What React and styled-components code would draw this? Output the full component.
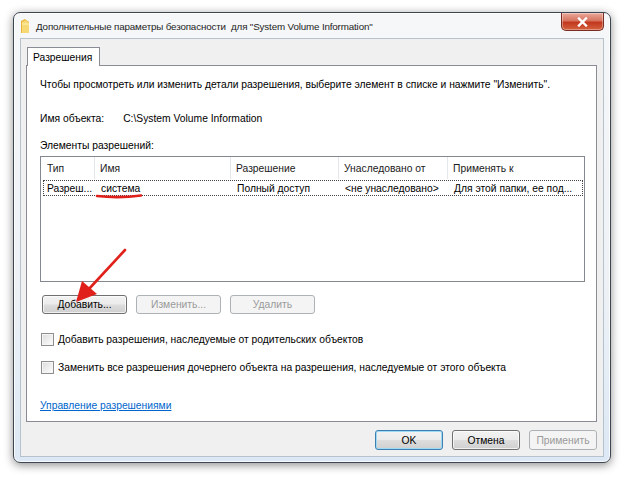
import React from 'react'
import styled, { createGlobalStyle, css } from 'styled-components'

const GlobalStyle = createGlobalStyle`
  html, body {
    margin: 0;
    padding: 0;
    background: #ffffff;
  }
  body {
    font-family: 'Liberation Sans', Arial, sans-serif;
    font-size: 10.3px;
    color: #000;
  }
`

const Page = styled.div`
  position: relative;
  width: 628px;
  height: 483px;
  padding: 12px 0 0 13px;
  box-sizing: border-box;
`

const Window = styled.div`
  width: 598px;
  height: 451px;
  box-sizing: border-box;
  border: 1px solid #3e4651;
  border-radius: 7px;
  background: linear-gradient(180deg, #f6f7f9 0%, #eef2f6 60%, #dce8f5 100%);
  box-shadow: 0 2px 10px rgba(0, 0, 0, 0.45), inset 0 0 0 1px rgba(255, 255, 255, 0.8);
  display: flex;
  flex-direction: column;
  padding: 0 6px 5px 6px;
`

const TitleBar = styled.div`
  height: 25px;
  display: flex;
  align-items: center;
  position: relative;
`

const TitleText = styled.div`
  margin-left: 6px;
  font-size: 9.8px;
  letter-spacing: -0.15px;
  color: #1e1e1e;
  padding-top: 2px;
`

const CloseButton = styled.div`
  position: absolute;
  right: 0;
  top: 0;
  width: 43px;
  height: 18px;
  box-sizing: border-box;
  border: 1px solid #7a2b22;
  border-top: none;
  border-radius: 0 0 5px 5px;
  background: linear-gradient(180deg, #e9a99b 0%, #d7735f 45%, #c2381f 55%, #d4623f 100%);
  box-shadow: inset 0 0 0 1px rgba(255, 255, 255, 0.35);
  display: flex;
  align-items: center;
  justify-content: center;
`

const Client = styled.div`
  flex: 1;
  background: #f0f0f0;
  border: 1px solid #b8c2cd;
  display: flex;
  flex-direction: column;
  padding: 8px 6px 0 5px;
`

const Tab = styled.div`
  align-self: flex-start;
  margin-left: 1px;
  width: 73px;
  padding-left: 5px;
  box-sizing: border-box;
  background: #ffffff;
  border: 1px solid #898c95;
  border-bottom: none;
  display: flex;
  align-items: center;
  position: relative;
  z-index: 1;
  margin-bottom: -1px;
  height: 19px;
`

const Panel = styled.div`
  height: 357px;
  box-sizing: border-box;
  background: #ffffff;
  border: 1px solid #898c95;
  padding: 11px 0 0 13px;
  display: flex;
  flex-direction: column;
`

const Line = styled.div`
  line-height: 15px;
  height: 15px;
  margin-top: ${(p) => p.$mt || 0}px;
  white-space: nowrap;
`

const Value = styled.span`
  margin-left: 19px;
`

const ListBox = styled.div`
  margin-top: 3px;
  width: 545px;
  height: 126px;
  box-sizing: border-box;
  border: 1px solid #828790;
  background: #fff;
`

const HeaderRow = styled.div`
  display: grid;
  grid-template-columns: 53px 136px 108px 109px 1fr;
  height: 22px;
`

const HeaderCell = styled.div`
  display: flex;
  align-items: center;
  padding-left: ${(p) => (p.$first ? 6 : 5)}px;
  border-left: ${(p) => (p.$first ? 'none' : '1px solid #e3e6ea')};
  color: #1a1a1a;
`

const DataRow = styled.div`
  display: grid;
  grid-template-columns: 51px 136px 108px 109px 1fr;
  margin: 1px 1px 0 2px;
  height: 16px;
  box-sizing: border-box;
  border: 1px dotted #444;
`

const DataCell = styled.div`
  display: flex;
  align-items: center;
  padding-left: ${(p) => (p.$first ? 3 : 6)}px;
  white-space: nowrap;
  overflow: hidden;
`

const ButtonRow = styled.div`
  display: flex;
  gap: ${(p) => p.$gap || 9}px;
  margin-top: ${(p) => p.$mt || 0}px;
  margin-left: ${(p) => p.$ml || 0}px;
  justify-content: ${(p) => (p.$end ? 'flex-end' : 'flex-start')};
`

const Button = styled.div`
  width: ${(p) => p.$w}px;
  height: ${(p) => p.$h || 19}px;
  box-sizing: border-box;
  border-radius: 3px;
  display: flex;
  align-items: center;
  justify-content: center;
  border: 1px solid #707070;
  background: linear-gradient(180deg, #f2f2f2 0%, #ebebeb 48%, #dddddd 52%, #cfcfcf 100%);
  box-shadow: inset 0 0 0 1px rgba(255, 255, 255, 0.7);
  color: #000;
  ${(p) =>
    p.$disabled &&
    css`
      border-color: #adb2b5;
      background: #f4f4f4;
      box-shadow: none;
      color: #9a9a9a;
    `}
  ${(p) =>
    p.$default &&
    css`
      border-color: #3c7fb1;
      box-shadow: inset 0 0 0 1px #9fdaf5;
    `}
`

const CheckRow = styled.div`
  display: flex;
  align-items: center;
  height: 15px;
  margin-top: ${(p) => p.$mt || 0}px;
  margin-left: 1px;
  white-space: nowrap;
`

const Checkbox = styled.div`
  width: 13px;
  height: 13px;
  box-sizing: border-box;
  border: 1px solid #8f8f8f;
  background: linear-gradient(135deg, #dcdcdc 0%, #f4f4f4 70%, #ffffff 100%);
  box-shadow: inset 0 0 0 1px #f5f5f5;
  margin-right: 4px;
`

const Link = styled.div`
  margin-top: 23px;
  color: #0066cc;
  text-decoration: underline;
  line-height: 15px;
`

const Footer = styled.div`
  padding: 8px 0 0;
`

const Annotation = styled.svg`
  position: absolute;
  left: 0;
  top: 0;
  pointer-events: none;
`

const FolderIcon = () => (
  <svg width="10" height="16" viewBox="0 0 10 16">
    <path d="M1 3 L5 1 L9 4 L9 15 L1 15 Z" fill="#e7b53a" />
    <path d="M2 4 L6 2 L9 5 L9 15 L2 15 Z" fill="#f6d874" />
    <path d="M2 6 L9 6" stroke="#fff2b8" strokeWidth="1" />
  </svg>
)

export default function App() {
  return (
    <Page>
      <GlobalStyle />
      <Window>
        <TitleBar>
          <FolderIcon />
          <TitleText>Дополнительные параметры безопасности&nbsp; для "System Volume Information"</TitleText>
          <CloseButton>
            <svg width="11" height="10" viewBox="0 0 11 10">
              <path d="M2 1.5 L9 8.5 M9 1.5 L2 8.5" stroke="#ffffff" strokeWidth="2.4" strokeLinecap="square" />
            </svg>
          </CloseButton>
        </TitleBar>
        <Client>
          <Tab>Разрешения</Tab>
          <Panel>
            <Line>
              Чтобы просмотреть или изменить детали разрешения, выберите элемент в списке и нажмите "Изменить".
            </Line>
            <Line $mt={19}>
              Имя объекта:<Value>C:\System Volume Information</Value>
            </Line>
            <Line $mt={12}>Элементы разрешений:</Line>
            <ListBox>
              <HeaderRow>
                <HeaderCell $first>Тип</HeaderCell>
                <HeaderCell>Имя</HeaderCell>
                <HeaderCell>Разрешение</HeaderCell>
                <HeaderCell>Унаследовано от</HeaderCell>
                <HeaderCell>Применять к</HeaderCell>
              </HeaderRow>
              <DataRow>
                <DataCell $first>Разреш...</DataCell>
                <DataCell>система</DataCell>
                <DataCell>Полный доступ</DataCell>
                <DataCell>&lt;не унаследовано&gt;</DataCell>
                <DataCell>Для этой папки, ее под...</DataCell>
              </DataRow>
            </ListBox>
            <ButtonRow $mt={13} $ml={2}>
              <Button $w={85}>Добавить...</Button>
              <Button $w={85} $disabled>Изменить...</Button>
              <Button $w={85} $disabled>Удалить</Button>
            </ButtonRow>
            <CheckRow $mt={18}>
              <Checkbox />
              Добавить разрешения, наследуемые от родительских объектов
            </CheckRow>
            <CheckRow $mt={13}>
              <Checkbox />
              Заменить все разрешения дочернего объекта на разрешения, наследуемые от этого объекта
            </CheckRow>
            <Link>Управление разрешениями</Link>
          </Panel>
          <Footer>
            <ButtonRow $end>
              <Button $w={68} $h={20} $default>OK</Button>
              <Button $w={68} $h={20}>Отмена</Button>
              <Button $w={68} $h={20} $disabled>Применить</Button>
            </ButtonRow>
          </Footer>
        </Client>
      </Window>
      <Annotation width="628" height="483" viewBox="0 0 628 483">
        <path d="M97 196 Q119 198.5 141 195.5" stroke="#e0201a" strokeWidth="2.6" fill="none" strokeLinecap="round" />
        <path d="M125 250 L88 290" stroke="#e0201a" strokeWidth="2.6" strokeLinecap="round" />
        <path d="M76 302 L82 281 L97 294 Z" fill="#e0201a" />
      </Annotation>
    </Page>
  )
}
